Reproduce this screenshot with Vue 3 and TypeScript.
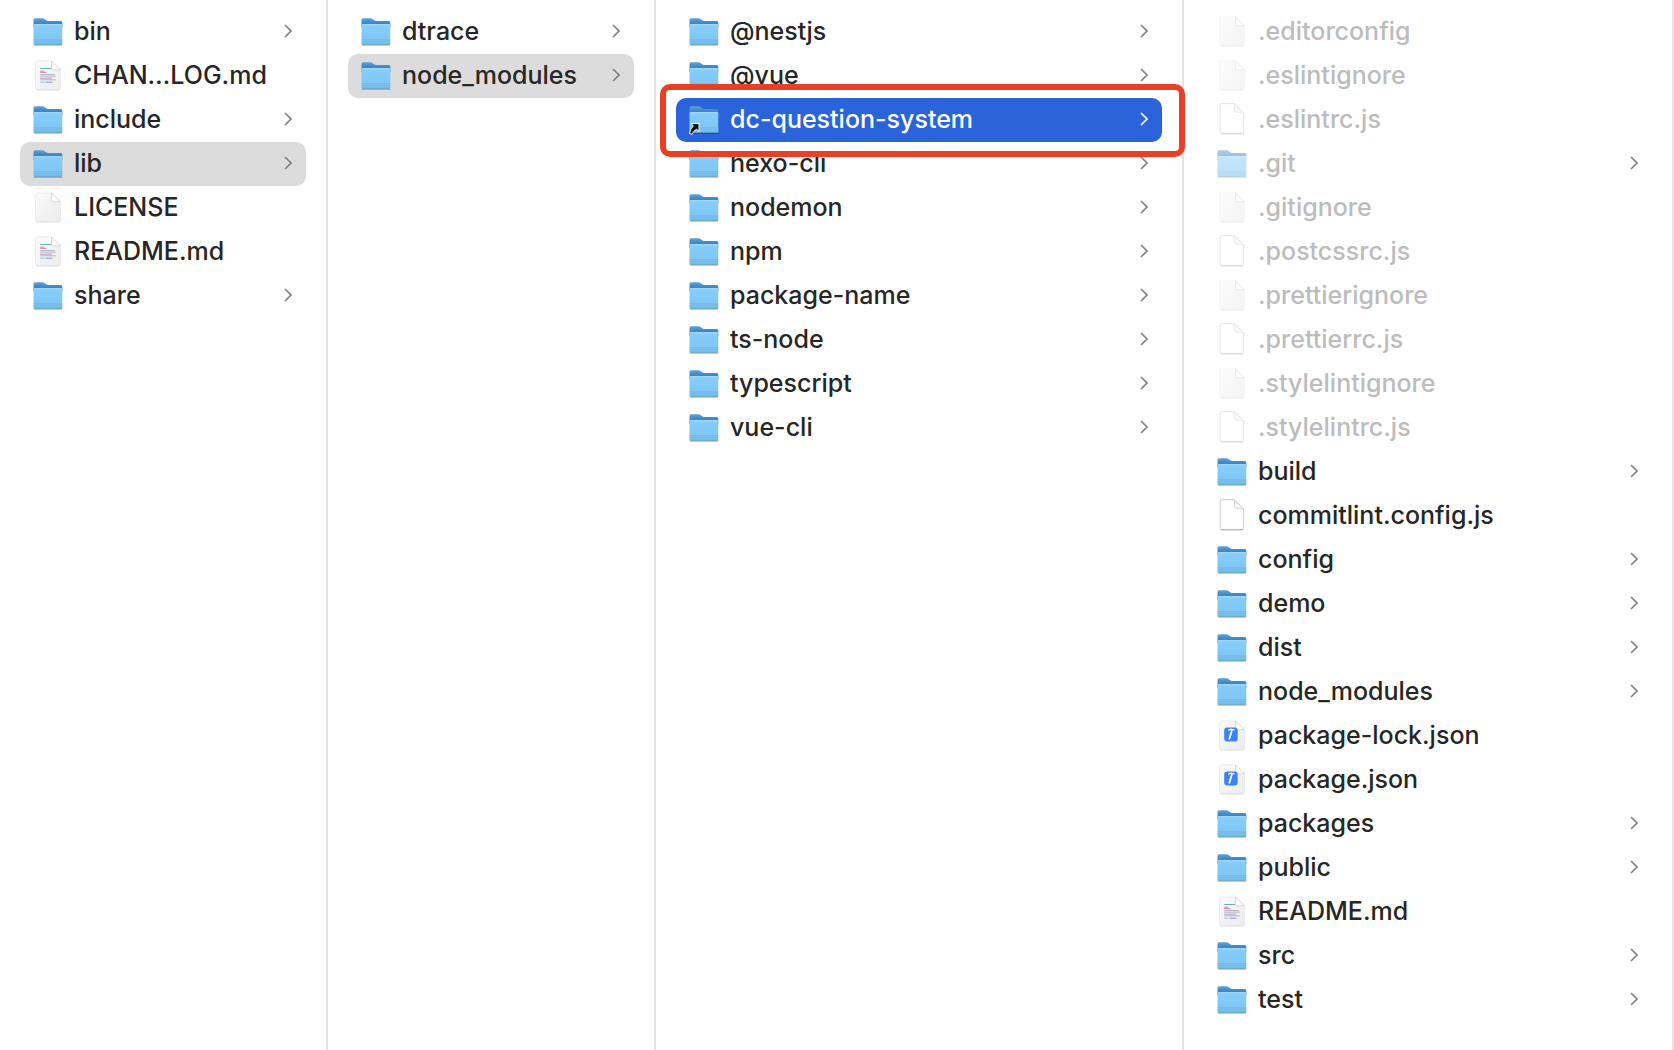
<script setup lang="ts">
type Kind = 'folder' | 'alias' | 'file' | 'markdown' | 'script' | 'json'

interface Entry {
  name: string
  kind: Kind
  hidden?: boolean
  state?: 'open' | 'active'
}

interface Column {
  label: string
  entries: Entry[]
}

const folder = (name: string): Entry => ({ name, kind: 'folder' })
const hidden = (name: string, kind: Kind): Entry => ({ name, kind, hidden: true })

const columns: Column[] = [
  {
    label: 'Root',
    entries: [
      folder('bin'),
      { name: 'CHAN…LOG.md', kind: 'markdown' },
      folder('include'),
      { name: 'lib', kind: 'folder', state: 'open' },
      { name: 'LICENSE', kind: 'file' },
      { name: 'README.md', kind: 'markdown' },
      folder('share'),
    ],
  },
  {
    label: 'lib',
    entries: [folder('dtrace'), { name: 'node_modules', kind: 'folder', state: 'open' }],
  },
  {
    label: 'node_modules',
    entries: [
      folder('@nestjs'),
      folder('@vue'),
      { name: 'dc-question-system', kind: 'alias', state: 'active' },
      folder('hexo-cli'),
      folder('nodemon'),
      folder('npm'),
      folder('package-name'),
      folder('ts-node'),
      folder('typescript'),
      folder('vue-cli'),
    ],
  },
  {
    label: 'dc-question-system',
    entries: [
      hidden('.editorconfig', 'file'),
      hidden('.eslintignore', 'file'),
      hidden('.eslintrc.js', 'script'),
      hidden('.git', 'folder'),
      hidden('.gitignore', 'file'),
      hidden('.postcssrc.js', 'script'),
      hidden('.prettierignore', 'file'),
      hidden('.prettierrc.js', 'script'),
      hidden('.stylelintignore', 'file'),
      hidden('.stylelintrc.js', 'script'),
      folder('build'),
      { name: 'commitlint.config.js', kind: 'script' },
      folder('config'),
      folder('demo'),
      folder('dist'),
      folder('node_modules'),
      { name: 'package-lock.json', kind: 'json' },
      { name: 'package.json', kind: 'json' },
      folder('packages'),
      folder('public'),
      { name: 'README.md', kind: 'markdown' },
      folder('src'),
      folder('test'),
    ],
  },
]

const isFolder = (entry: Entry): boolean => entry.kind === 'folder' || entry.kind === 'alias'
</script>

<template>
  <svg class="defs" width="0" height="0" aria-hidden="true">
    <defs>
      <linearGradient id="folder-back" x1="0" y1="0" x2="0" y2="1">
        <stop offset="0" stop-color="#5ba3d9" />
        <stop offset="0.5" stop-color="#3b85c8" />
        <stop offset="1" stop-color="#3580c4" />
      </linearGradient>
      <linearGradient id="folder-front" x1="0" y1="0" x2="0" y2="1">
        <stop offset="0" stop-color="#8fd0f8" />
        <stop offset="0.15" stop-color="#86ccf9" />
        <stop offset="1" stop-color="#7dc4f1" />
      </linearGradient>
      <linearGradient id="paper" x1="0" y1="0" x2="1" y2="1">
        <stop offset="0" stop-color="#fafafa" />
        <stop offset="1" stop-color="#ececec" />
      </linearGradient>
    </defs>
  </svg>
  <main class="browser">
    <nav v-for="column in columns" :key="column.label" class="column" :aria-label="column.label">
      <ul class="list">
        <li v-for="entry in column.entries" :key="entry.name" class="item">
          <button type="button" class="row" :class="[entry.state, { hidden: entry.hidden }]">
            <svg class="icon" viewBox="0 0 32 32" aria-hidden="true">
              <g v-if="isFolder(entry)">
                <path d="M1.8 29h28.4" stroke="#000" stroke-opacity=".3" stroke-width="1.4" />
                <path d="M1.5 3.8Q1.5 2.3 3 2.3h7.6q1.2 0 2 .8l1.2 1q.8.8 2 .8h13q1.5 0 1.5 1.5V12H1.500Z" fill="url(#folder-back)" />
                <path d="M1.5 9.300q0-1.200 1.200-1.200h26.400q1.200 0 1.200 1.200v18q0 1.300-1.200 1.300H2.700q-1.200 0-1.200-1.300Z" fill="url(#folder-front)" />
                <path d="M2.500 8.600h26.800" stroke="#a2d8fa" />
                <path d="M1.500 23.800h28.800M1.500 25.600h28.800" stroke="#69b1e2" stroke-width=".7" />
                <path d="M2 28.200h27.800" stroke="#5a9dcc" />
                <path v-if="entry.kind === 'alias'" d="M3 19.500h8v8l-2.400-2.200q-3.200 1.500-4.600 5L1.500 29.500q.4-4.500 3.800-7.600Z" fill="#111" stroke="#fff" stroke-linejoin="round" />
              </g>
              <g v-else-if="entry.kind === 'script'">
                <path d="M5.500-.4h13L27.600 9v19.200q0 1.400-1.400 1.400H5.600q-1.400 0-1.400-1.400V1q0-1.400 1.300-1.400Z" fill="#fff" stroke="#c6c6c6" stroke-width=".9" />
                <path d="M18.500-.2V6.500q0 1.500 1.500 1.500l7.400 1Z" fill="#f7f7f7" stroke="#cecece" stroke-width=".8" stroke-linejoin="round" />
                <path d="M4.500 30h22.800" stroke="#000" stroke-opacity=".2" />
              </g>
              <g v-else>
                <path d="M4.500 29.900h23" stroke="#000" stroke-opacity=".18" />
                <path d="M5 1h14.500l9 8.800v18q0 1.700-1.700 1.700H5.200q-1.700 0-1.700-1.700V2.700Q3.500 1 5 1Z" fill="url(#paper)" stroke="#e2e2e2" stroke-width=".6" />
                <path d="M19.500 1.200v7q0 1.600 1.600 1.600h7.400Z" fill="#fff" stroke="#cacaca" stroke-width=".7" stroke-linejoin="round" />
                <g v-if="entry.kind === 'markdown'" fill="none">
                  <path d="M8.200 8.500h11" stroke="#62b5b3" />
                  <path d="M8.200 11.200h4M8.200 12.400h6" stroke="#dc7aa6" />
                  <path d="M8.200 14.600h14.600M8.200 16.200h15.600M8.200 19.800h15.600" stroke="#b0b4bb" />
                  <path d="M8.200 18.200h12" stroke="#b39bd2" />
                  <path d="M8.200 22.200h4" stroke="#8cc6c0" />
                  <path d="M13.500 22.200h7" stroke="#8398ea" />
                </g>
                <g v-if="entry.kind === 'json'">
                  <rect x="8.200" y="7.500" width="13.500" height="14" rx="3" fill="#3b82f7" />
                  <path d="M12 10.200l3-1 3.600.7" fill="none" stroke="#fff" stroke-width="1.200" />
                  <path d="M16 9.800l-2.800 9.800" stroke="#fff" stroke-width="1.800" />
                </g>
              </g>
            </svg>
            <span class="name">{{ entry.name }}</span>
            <svg v-if="isFolder(entry)" class="chevron" viewBox="0 0 8 16" aria-hidden="true">
              <path d="M1 1l6 6-6 6" fill="none" stroke="currentColor" stroke-width="1.600" />
            </svg>
          </button>
          <span v-if="entry.state === 'active'" class="highlight" aria-hidden="true"></span>
        </li>
      </ul>
    </nav>
  </main>
</template>

<style>
body {
  margin: 0;
  background: #fff;
}
</style>

<style scoped>
.defs {
  position: absolute;
}

.browser {
  display: grid;
  grid-template-columns: 328fr 328fr 528fr 490fr;
  min-height: 100vh;
  background: #fff;
  color: #262626;
  font-family: Inter, "Liberation Sans", sans-serif;
  font-size: 25px;
  font-weight: 500;
}

.column {
  min-width: 0;
  border-right: 2px solid #e4e4e4;
}

.list {
  margin: 0;
  padding: 10px 20px;
  list-style: none;
}

.item {
  position: relative;
}

.row {
  display: flex;
  align-items: center;
  width: 100%;
  height: 44px;
  margin: 0;
  padding: 0 14px 0 12px;
  border: 0;
  border-radius: 10px;
  background: transparent;
  color: inherit;
  font: inherit;
  text-align: left;
}

.open {
  background: #dcdcdc;
}

.active {
  background: #2b64da;
  color: #fff;
}

.hidden {
  color: #bcbcbc;
}

.icon {
  flex: none;
  width: 32px;
  height: 32px;
  overflow: visible;
}

.hidden .icon {
  opacity: 0.5;
}

.name {
  flex: 1;
  min-width: 0;
  margin-left: 10px;
  padding-bottom: 2px;
  line-height: 42px;
  white-space: nowrap;
}

.chevron {
  flex: none;
  width: 8px;
  height: 16px;
  color: #808080;
}

.active .chevron {
  color: #fff;
}

.highlight {
  position: absolute;
  z-index: 1;
  inset: -14px -23px -15px -16px;
  border: 6px solid #e94025;
  border-radius: 10px;
  pointer-events: none;
}
</style>
